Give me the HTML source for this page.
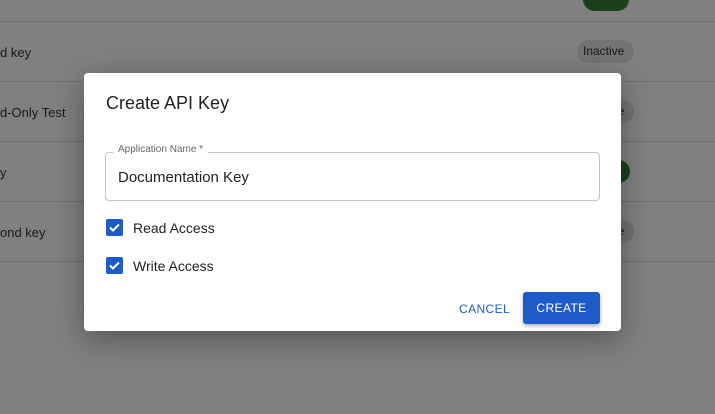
<!DOCTYPE html><html><head><style>
*{margin:0;padding:0;box-sizing:border-box}
body{width:715px;height:414px;overflow:hidden;background:#808080;font-family:"Liberation Sans",sans-serif;position:relative}
.line{position:absolute;left:0;width:715px;height:1px;background:#6f6f6f}
.rt{position:absolute;left:0;font-size:13px;color:#1a1a1a}
.chip{position:absolute;height:23px;border-radius:12px;font-size:12px;color:#1a1a1a;background:#737373;padding:0 6px;line-height:23px;width:57px}
.dlg{position:absolute;left:84px;top:73px;width:537px;height:258px;background:#fff;border-radius:4px;box-shadow:0 8px 30px rgba(0,0,0,.35)}
.cb{position:absolute;left:22px;width:17px;height:17px;background:#1f5bc8;border-radius:2px}
.lbl{position:absolute;left:49px;font-size:14px;color:#222}
</style></head><body>
<div class="chip" style="left:583px;top:-12px;width:46px;background:#1b401b"></div>
<div class="line" style="top:21px"></div>
<div class="rt" style="top:45px">d key</div>
<div class="chip" style="left:577px;top:40px">Inactive</div>
<div class="line" style="top:81px"></div>
<div class="rt" style="top:105px">d-Only Test</div>
<div class="chip" style="left:577px;top:100px">Inactive</div>
<div class="line" style="top:141px"></div>
<div class="rt" style="top:165px">y</div>
<div class="chip" style="left:583px;top:160px;width:47px;background:#1b401b"></div>
<div class="line" style="top:201px"></div>
<div class="rt" style="top:225px">ond key</div>
<div class="chip" style="left:577px;top:220px">Inactive</div>
<div class="line" style="top:261px"></div>
<div class="dlg">
<div style="position:absolute;left:22px;top:20px;font-size:18px;color:#222">Create API Key</div>
<div style="position:absolute;left:21px;top:79px;width:495px;height:49px;border:1px solid #c4c4c4;border-radius:4px"></div>
<div style="position:absolute;left:29px;top:71px;background:#fff;padding:0 5px;font-size:10px;color:#666">Application Name *</div>
<div style="position:absolute;left:34px;top:96px;font-size:15px;color:#222">Documentation Key</div>
<div class="cb" style="top:146px"><svg width="17" height="17" viewBox="0 0 17 17"><path d="M4 8.5l3 3 6-6" stroke="#fff" stroke-width="2" fill="none"/></svg></div>
<div class="lbl" style="top:147px">Read Access</div>
<div class="cb" style="top:184px"><svg width="17" height="17" viewBox="0 0 17 17"><path d="M4 8.5l3 3 6-6" stroke="#fff" stroke-width="2" fill="none"/></svg></div>
<div class="lbl" style="top:185px">Write Access</div>
<div style="position:absolute;left:375px;top:229px;font-size:12px;color:#1f5bc8;letter-spacing:.4px">CANCEL</div>
<div style="position:absolute;left:439px;top:219px;width:77px;height:32px;background:#1f5bc8;border-radius:3px;color:#fff;font-size:12px;letter-spacing:.4px;text-align:center;line-height:32px;box-shadow:0 2px 4px rgba(0,0,0,.3)">CREATE</div>
</div>
</body></html>
